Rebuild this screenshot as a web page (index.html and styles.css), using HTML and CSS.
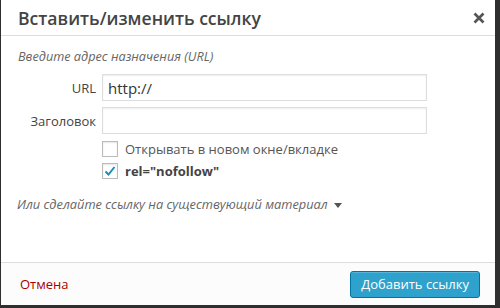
FILE: index.html
```html
<!DOCTYPE html>
<html lang="ru">
<head>
    <meta charset="UTF-8">
    <title>Вставить/изменить ссылку</title>
    <link rel="stylesheet" href="styles.css">
</head>
<body>

    <!-- Link dialog -->
    <div class="modal">
        <div class="modal-head">
            <h1>Вставить/изменить ссылку</h1>
            <span class="close">
                <svg width="12" height="12" viewBox="0 0 12 12"><path d="M1.5 1.5 L10.5 10.5 M10.5 1.5 L1.5 10.5" stroke="#555" stroke-width="2.6"/></svg>
            </span>
        </div>

        <div class="modal-body">
            <p class="howto">Введите адрес назначения (URL)</p>

            <div class="fields">
                <label>URL</label>
                <input type="text" value="http://">
                <label>Заголовок</label>
                <input type="text" value="">
            </div>

            <div class="checks">
                <label class="check"><span class="box"></span>Открывать в новом окне/вкладке</label>
                <label class="check bold">
                    <span class="box">
                        <svg width="12" height="12" viewBox="0 0 12 12"><path d="M1.5 6.5 L4.5 9.5 L10.5 2" fill="none" stroke="#1e8cbe" stroke-width="2"/></svg>
                    </span>rel="nofollow"
                </label>
            </div>

            <p class="toggle">Или сделайте ссылку на существующий материал <span class="arrow"></span></p>
        </div>

        <div class="modal-foot">
            <a href="#" class="cancel">Отмена</a>
            <button class="primary">Добавить ссылку</button>
        </div>
    </div>

</body>
</html>
```

FILE: styles.css
```css
body {
    margin: 0;
    padding: 0 0 0 1px;
    background-color: #2f2f2f;
    font-family: "Open Sans", "Noto Sans", sans-serif;
    color: #444;
    width: 500px;
    height: 308px;
    overflow: hidden;
}

/* Modal box */
.modal {
    width: 494px;
    height: 305px;
    background-color: #fff;
    display: flex;
    flex-direction: column;
}

.modal-head {
    height: 35px;
    border-bottom: 1px solid #ddd;
    display: flex;
    align-items: center;
    justify-content: space-between;
    padding: 0 10px 0 17px;
}

.modal-head h1 {
    margin: 0;
    font-size: 17.6px;
    font-weight: 600;
    color: #444;
}

.close {
    display: flex;
    margin-top: 1px;
}

/* Body */
.modal-body {
    flex: 1;
    padding: 10px 16px 0 17px;
}

.howto {
    margin: 0 0 8px;
    font-size: 12.7px;
    line-height: 20px;
    font-style: italic;
    color: #666;
}

.fields {
    display: grid;
    grid-template-columns: 78px 325px;
    column-gap: 6px;
    row-gap: 6px;
    align-items: center;
}

.fields label {
    text-align: right;
    font-size: 13px;
    color: #444;
}

.fields input {
    box-sizing: border-box;
    height: 27px;
    border: 1px solid #ddd;
    padding: 0 5px;
    font-family: "Open Sans", sans-serif;
    font-size: 15px;
    color: #333;
    box-shadow: inset 0 1px 2px rgba(0, 0, 0, 0.07);
    outline: none;
}

.checks {
    margin: 7px 0 0 84px;
    display: flex;
    flex-direction: column;
    gap: 6px;
}

.check {
    display: flex;
    align-items: center;
    font-size: 13px;
    color: #555;
    height: 16px;
}

.check.bold {
    font-weight: 700;
    color: #444;
}

.box {
    box-sizing: border-box;
    width: 16px;
    height: 16px;
    border: 1px solid #bbb;
    background-color: #fff;
    box-shadow: inset 0 1px 2px rgba(0, 0, 0, 0.1);
    margin-right: 7px;
    display: flex;
    align-items: center;
    justify-content: center;
}

.toggle {
    margin: 16px 0 0 -1px;
    font-size: 12.8px;
    font-style: italic;
    color: #666;
}

.arrow {
    display: inline-block;
    width: 0;
    height: 0;
    border-left: 4px solid transparent;
    border-right: 4px solid transparent;
    border-top: 5px solid #555;
    margin-left: 3px;
    vertical-align: middle;
}

/* Footer */
.modal-foot {
    height: 42px;
    border-top: 1px solid #ddd;
    background-color: #fcfcfc;
    display: flex;
    align-items: center;
    justify-content: space-between;
    padding: 0 15px 0 19px;
}

.cancel {
    color: #a00;
    text-decoration: none;
    font-size: 13px;
}

.primary {
    height: 27px;
    padding: 0 10px;
    background-color: #2ea2cc;
    border: 1px solid #0074a2;
    border-radius: 3px;
    color: #fff;
    font-family: "Open Sans", sans-serif;
    font-size: 13px;
    box-shadow: inset 0 1px 0 rgba(120, 200, 230, 0.5);
}
```
